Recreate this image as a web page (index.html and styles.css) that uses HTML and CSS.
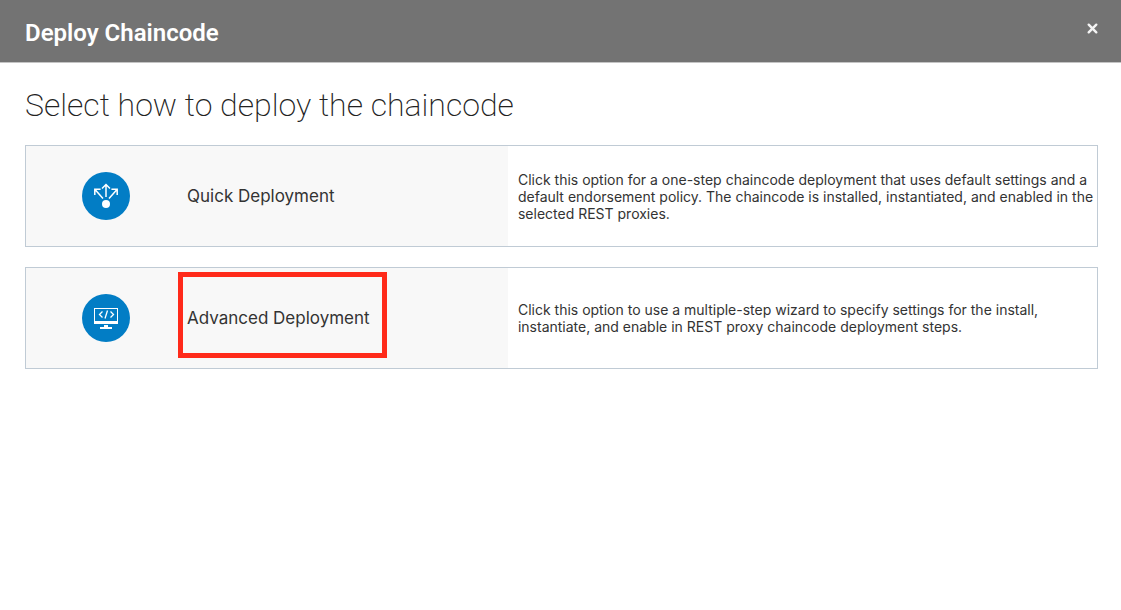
FILE: index.html
```html
<!DOCTYPE html>
<html lang="en">
<head>
<meta charset="utf-8">
<meta name="viewport" content="width=device-width, initial-scale=1">
<title>Deploy Chaincode</title>
<link rel="stylesheet" href="styles.css">
</head>
<body>
<header class="dialog-header">
  <h1 class="dialog-title">Deploy Chaincode</h1>
  <button class="close" type="button" aria-label="Close">
    <svg width="11" height="11" viewBox="0 0 11 11" aria-hidden="true"><path d="M1.7 1.7 9.3 9.3M9.3 1.7 1.7 9.3" fill="none" stroke="#f4f4f4" stroke-width="2.4" stroke-linecap="round"/></svg>
  </button>
</header>
<main class="content">
  <h2 class="prompt">Select how to deploy the chaincode</h2>
  <div class="options">
    <button class="option" type="button">
      <span class="option-name">
        <svg class="option-icon" viewBox="0 0 48 48" aria-hidden="true">
          <circle cx="24" cy="24" r="24" fill="#027dc5"/>
          <circle cx="24" cy="32" r="4" fill="#fff"/>
          <g fill="none" stroke="#fff" stroke-width="1.5">
            <path d="M24 25V13M20 16.5l4-4 4 4"/>
            <path d="M21 26.5 13 17.5M12.8 23V17.3h5.8"/>
            <path d="M27 26.5l8-9M35.2 23V17.3h-5.8"/>
          </g>
        </svg>
        <span class="option-label">Quick Deployment</span>
      </span>
      <span class="option-text">Click this option for a one-step chaincode deployment that uses default settings and a default endorsement policy. The chaincode is installed, instantiated, and enabled in the selected REST proxies.</span>
    </button>
    <button class="option" type="button">
      <span class="option-name">
        <svg class="option-icon" viewBox="0 0 48 48" aria-hidden="true">
          <circle cx="24" cy="24" r="24" fill="#027dc5"/>
          <path fill="#fff" fill-rule="evenodd" d="M12 14h24v16H12zM13 15v12h22V15z"/>
          <path fill="#fff" d="M22 31h4v2h4v2H18v-2h4z"/>
          <path fill="none" stroke="#fff" stroke-width="1.3" d="M20.5 17.5l-3 3 3 3M28.5 17.5l3 3-3 3M25.5 16.5l-2.500 8"/>
        </svg>
        <span class="option-label option-label-marked">Advanced Deployment</span>
      </span>
      <span class="option-text">Click this option to use a multiple-step wizard to specify settings for the install, instantiate, and enable in REST proxy chaincode deployment steps.</span>
    </button>
  </div>
</main>
</body>
</html>
```
FILE: styles.css
```css
* {
  box-sizing: border-box;
}

body {
  margin: 0;
  background: #fff;
  color: #333;
  font-family: Inter, "Liberation Sans", sans-serif;
}

.dialog-header {
  display: flex;
  align-items: flex-start;
  justify-content: space-between;
  padding: 18px 23px 14px 25px;
  border-bottom: 1px solid #c4c4c4;
  background: #737373;
}

.dialog-title {
  margin: 0;
  color: #fff;
  font-family: Roboto, "Liberation Sans", sans-serif;
  font-size: 24px;
  font-weight: 600;
  line-height: 30px;
}

.close {
  display: flex;
  margin-top: 5px;
  padding: 0;
  border: 0;
  background: none;
  cursor: pointer;
}

.content {
  padding: 22px 23px 20px 25px;
}

.prompt {
  margin: 0 0 20px;
  color: #222;
  font-family: Roboto, "Liberation Sans", sans-serif;
  font-size: 32px;
  font-weight: 200;
  line-height: 40px;
}

.options {
  display: flex;
  flex-direction: column;
  gap: 20px;
}

.option {
  display: grid;
  grid-template-columns: 45% 55%;
  min-height: 102px;
  padding: 0;
  border: 1px solid #c0cbd5;
  background: #fff;
  color: inherit;
  font: inherit;
  text-align: left;
  cursor: pointer;
}

.option-name {
  display: flex;
  align-items: center;
  gap: 57px;
  padding-left: 56px;
  background: #f8f8f8;
}

.option-icon {
  width: 48px;
  height: 48px;
  flex: none;
}

.option-label {
  position: relative;
  font-size: 17px;
  line-height: 24px;
}

/* Highlight frame drawn over the card */
.option-label-marked::after {
  content: "";
  position: absolute;
  inset: -34px -17px -28px -9px;
  border: 5px solid #ff2a1a;
}

.option-text {
  align-self: center;
  padding-left: 10px;
  font-size: 14px;
  line-height: 17px;
}
```
